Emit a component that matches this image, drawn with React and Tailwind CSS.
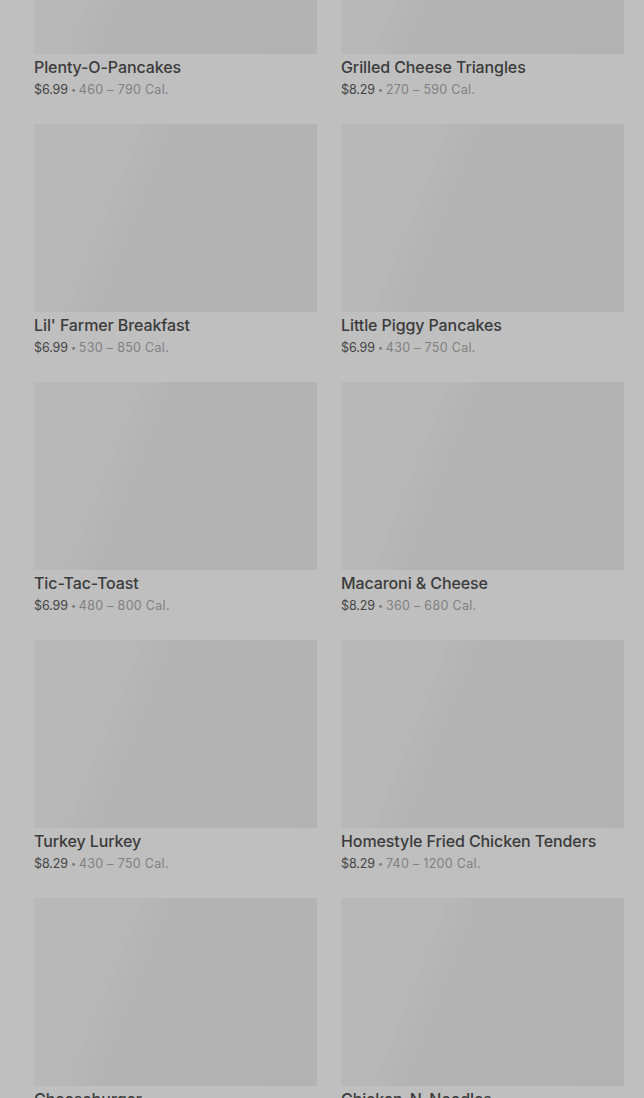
const items = [
  { name: "Plenty-O-Pancakes", price: "$6.99", cal: "460 – 790 Cal." },
  { name: "Grilled Cheese Triangles", price: "$8.29", cal: "270 – 590 Cal." },
  { name: "Lil' Farmer Breakfast", price: "$6.99", cal: "530 – 850 Cal." },
  { name: "Little Piggy Pancakes", price: "$6.99", cal: "430 – 750 Cal." },
  { name: "Tic-Tac-Toast", price: "$6.99", cal: "480 – 800 Cal." },
  { name: "Macaroni & Cheese", price: "$8.29", cal: "360 – 680 Cal." },
  { name: "Turkey Lurkey", price: "$8.29", cal: "430 – 750 Cal." },
  { name: "Homestyle Fried Chicken Tenders", price: "$8.29", cal: "740 – 1200 Cal." },
  { name: "Cheeseburger", price: "$8.29", cal: "610 – 930 Cal." },
  { name: "Chicken-N-Noodles", price: "$6.99", cal: "290 – 610 Cal." },
];

function MenuCard({ item }) {
  return (
    <div className="flex flex-col">
      {/* Image placeholder (loading skeleton) */}
      <div className="h-[188px] w-full bg-[linear-gradient(112deg,#b8b8b8_0%,#b8b8b8_28%,#b3b3b3_40%,#b2b2b2_100%)]" />
      <div className="mt-[2px] text-[16px] leading-[22px] font-medium tracking-[-0.1px] text-[#3b3b3b]">{item.name}</div>
      <div className="mt-[3px] flex items-center text-[12.5px] leading-[18px] tracking-[-0.1px]">
        <span className="text-[#444444]">{item.price}</span>
        <span className="mx-[3px] text-[9px] text-[#7a7a7a]">•</span>
        <span className="tracking-[0.3px] text-[#808080]">{item.cal}</span>
      </div>
    </div>
  );
}

export default function App() {
  return (
    <div
      className="h-[1098px] w-full overflow-hidden bg-[#bfbfbf]"
      style={{ fontFamily: "Inter, 'Noto Sans', sans-serif" }}
    >
      <div className="-mt-[134px] grid grid-cols-2 gap-x-[24px] gap-y-[25px] pl-[34px] pr-[20px]">
        {items.map((item) => (
          <MenuCard key={item.name} item={item} />
        ))}
      </div>
    </div>
  );
}
